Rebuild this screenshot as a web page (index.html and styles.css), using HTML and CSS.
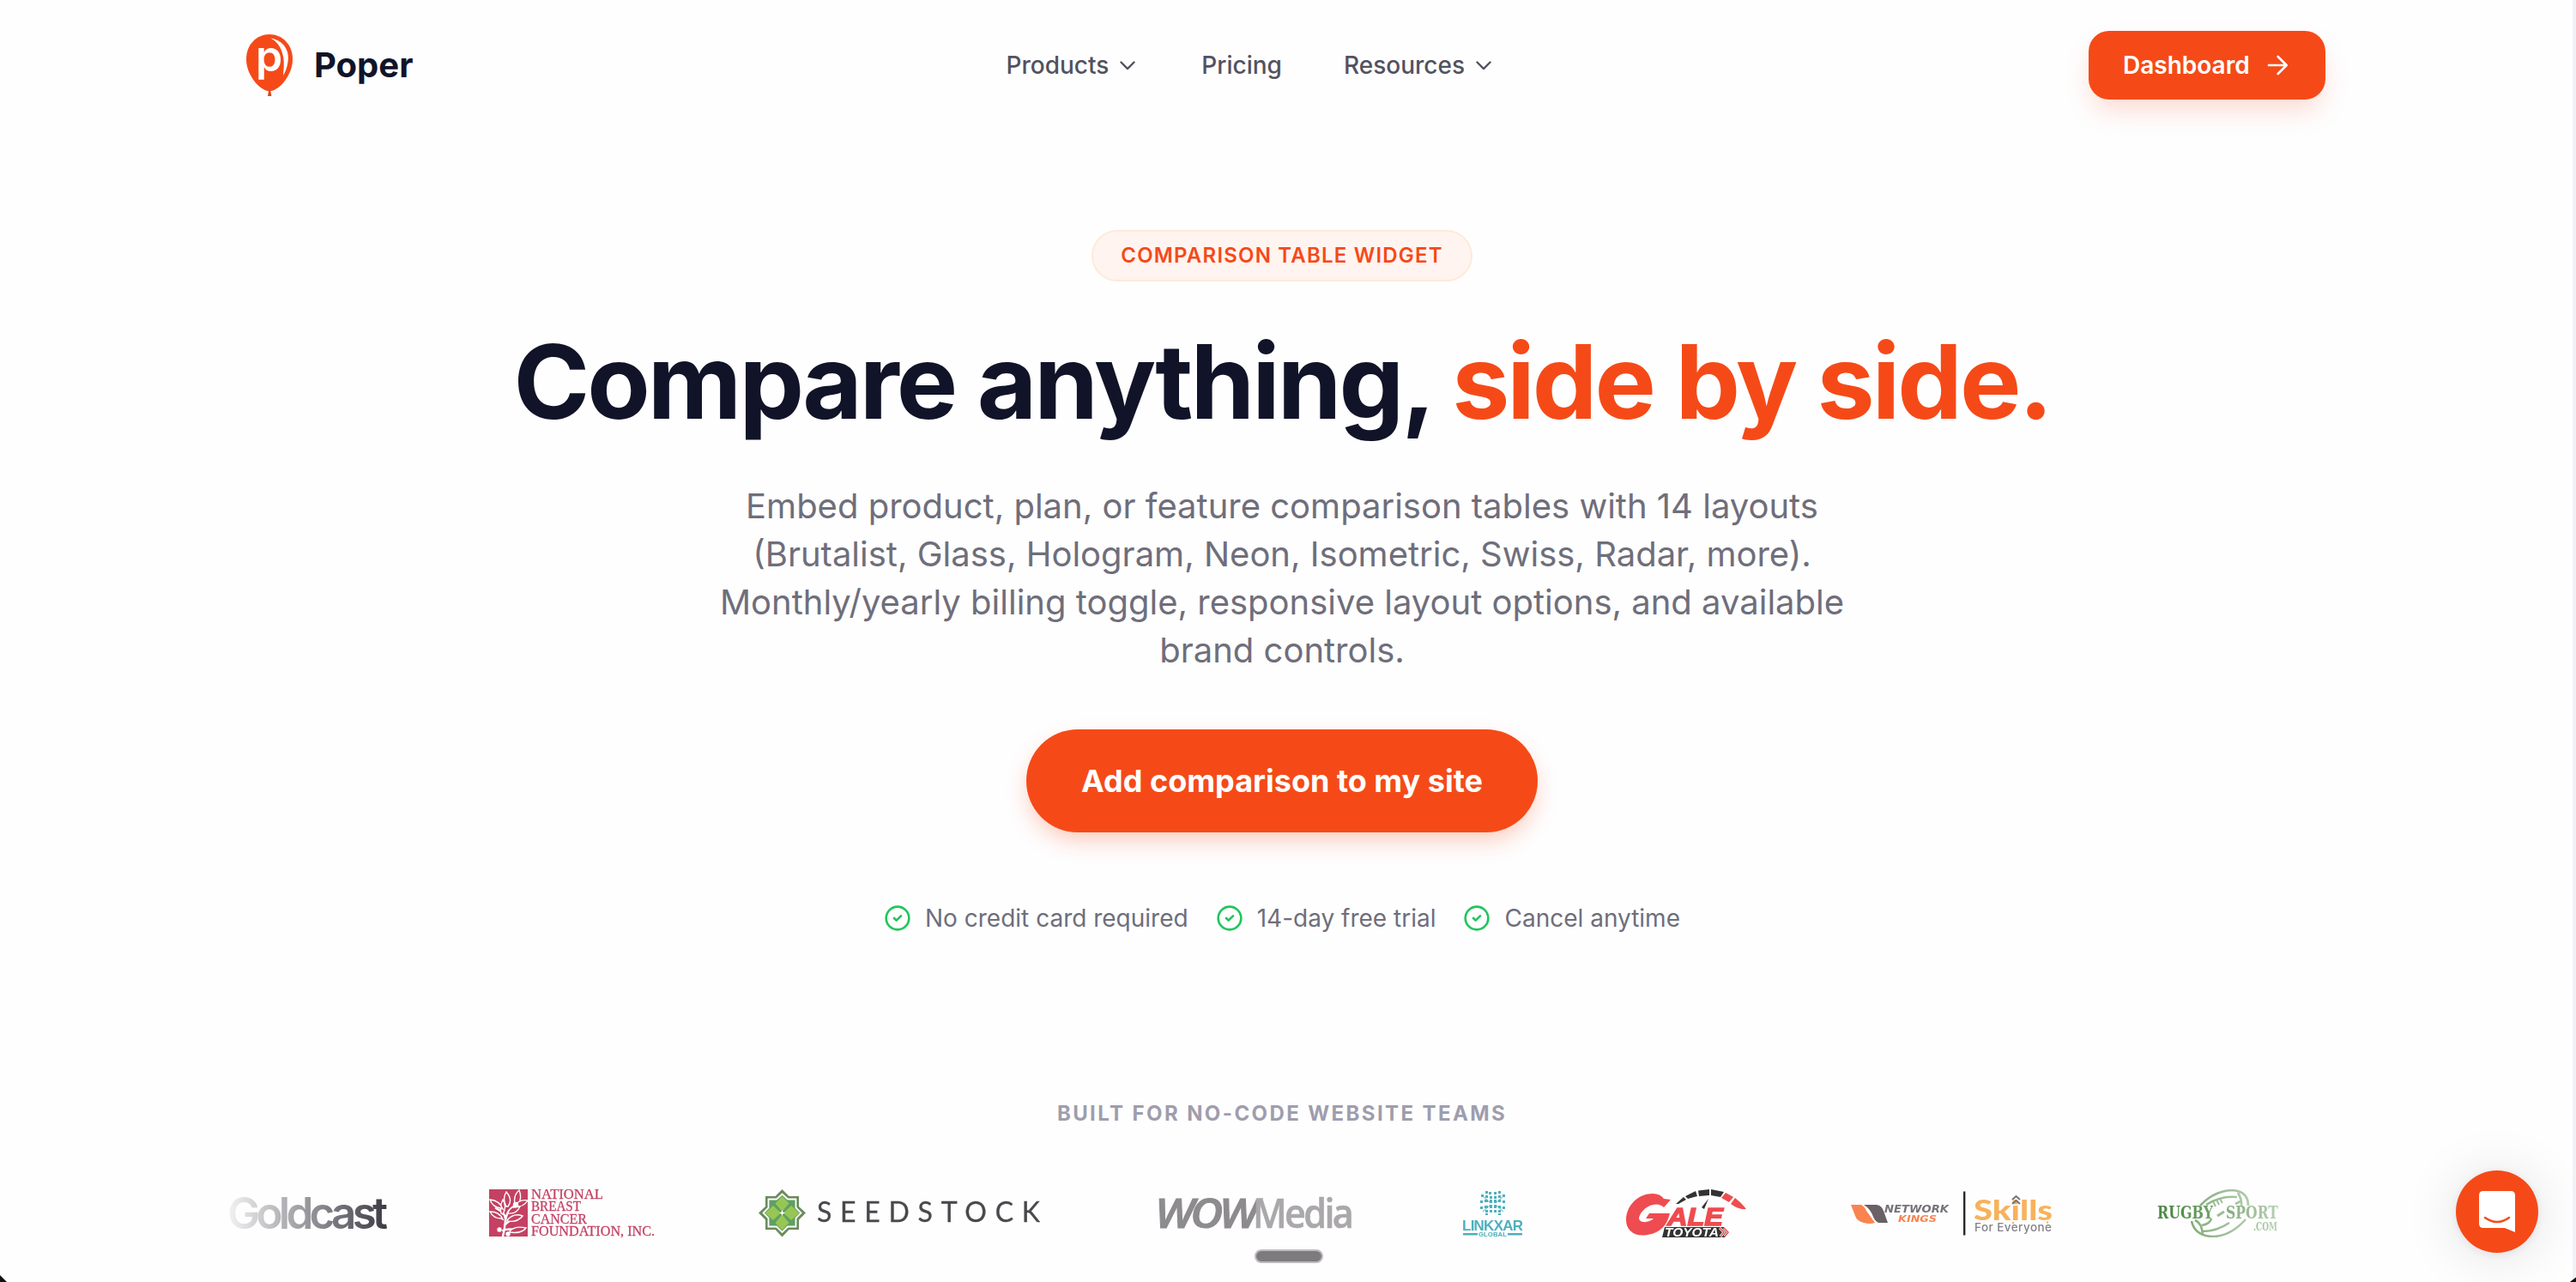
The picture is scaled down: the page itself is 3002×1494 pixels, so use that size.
FILE: index.html
```html
<!DOCTYPE html>
<html lang="en">
<head>
    <meta charset="utf-8">
    <title>Comparison Table Widget | Poper</title>
    <link rel="stylesheet" href="styles.css">
</head>
<body>
    <div class="page">
        <header class="header">
            <a class="brand">
                <svg class="brand-mark" width="72" height="80" viewBox="0 0 72 80">
                    <path d="M36 4C51 4 63 16 63 33c0 17-13 33-23 36.500q-4 1.200-8 0C22 66 9 50 9 33 9 16 21 4 36 4z" fill="#f54a18"/>
                    <path d="M35.300 69h1.800l.6 3 .7 4h-4.400l.7-4z" fill="#d9481c"/>
                    <text x="20" y="46.500" class="mark-p">p</text>
                    <path d="M37.500 8.500C53 11 60 24 57.500 36c-1 7-3 12-5.500 16 .5-8 2-17-1-26-2-8-7-14-13.500-17.500z" fill="#fff"/>
                </svg>
                <span>Poper</span>
            </a>
            <nav class="nav">
                <a>Products <svg width="28" height="28" viewBox="0 0 24 24"><path d="m5.500 9 6.500 6.500L18.500 9"/></svg></a>
                <a>Pricing</a>
                <a>Resources <svg width="28" height="28" viewBox="0 0 24 24"><path d="m5.500 9 6.500 6.500L18.500 9"/></svg></a>
            </nav>
            <a class="dashboard">Dashboard
                <svg width="32" height="32" viewBox="0 0 24 24"><path d="M4.500 12h15M12.500 4.500 20 12l-7.500 7.500"/></svg>
            </a>
        </header>

        <main class="hero">
            <div class="tag">COMPARISON TABLE WIDGET</div>
            <h1>Compare anything, <span>side by side.</span></h1>
            <p class="lead">Embed product, plan, or feature comparison tables with 14 layouts<br>
                (Brutalist, Glass, Hologram, Neon, Isometric, Swiss, Radar, more).<br>
                Monthly/yearly billing toggle, responsive layout options, and available<br>
                brand controls.</p>
            <a class="cta">Add comparison to my site</a>
            <ul class="checks">
                <li><svg width="32" height="32" viewBox="0 0 24 24"><circle cx="12" cy="12" r="10"/><path d="m9 12 2 2 4-4"/></svg>No credit card required</li>
                <li><svg width="32" height="32" viewBox="0 0 24 24"><circle cx="12" cy="12" r="10"/><path d="m9 12 2 2 4-4"/></svg>14-day free trial</li>
                <li><svg width="32" height="32" viewBox="0 0 24 24"><circle cx="12" cy="12" r="10"/><path d="m9 12 2 2 4-4"/></svg>Cancel anytime</li>
            </ul>
        </main>

        <section class="teams">
            <h2>BUILT FOR NO-CODE WEBSITE TEAMS</h2>
            <div class="logos">
                <!-- Goldcast -->
                <svg width="183" height="56" viewBox="0 0 183 56">
                    <text x="-2" y="46" textLength="187" font-family="Inter" font-weight="600" font-size="51" fill="#3b3944">Goldcast</text>
                </svg>
                <!-- National Breast Cancer Foundation -->
                <svg width="194" height="56" viewBox="0 0 194 56">
                    <path d="M0 0h45v55H0z" fill="#c44163"/>
                    <g fill="#c44163" stroke="#fff" stroke-width="1.400" stroke-linecap="round">
                        <path d="M16 55c2-9 3-14 3-21-1-7-6-9-11-12M19 36c2-9 4-13 11-17M18 42c5-6 9-7 14-9M16 48c6-3 11-1 16-1" fill="none" stroke-width="2.400"/>
                        <path d="M20 20q-5-9 0-17 8 9 2 17zM30 17q-2-10 5-16 4 10-2 17zM14 28q-2-9 2-16 5 8 0 17z"/>
                        <path d="M14 22Q4 21 1 12q11 1 15 11zM14 34Q5 34 1 26q11 0 15 9zM22 27q4-9 14-7-4 9-14 8zM21 36q8-9 18-5-6 8-18 6zM29 20q6-9 16-7-5 8-16 8zM24 49q6-7 19-4-5 7-19 5z"/>
                        <circle cx="31" cy="18" r="2.500" fill="#fff"/><circle cx="12" cy="47" r="2" fill="#fff"/><circle cx="22" cy="52" r="2" fill="#fff"/>
                    </g>
                    <g font-family="Liberation Serif" font-size="17" fill="#c44163" stroke="#c44163" stroke-width=".3">
                        <text x="49" y="11" textLength="84" lengthAdjust="spacingAndGlyphs">NATIONAL</text>
                        <text x="49" y="25.200" textLength="58" lengthAdjust="spacingAndGlyphs">BREAST</text>
                        <text x="49" y="39.500" textLength="65" lengthAdjust="spacingAndGlyphs">CANCER</text>
                        <text x="49" y="53.500" textLength="144" lengthAdjust="spacingAndGlyphs">FOUNDATION, INC.</text>
                    </g>
                </svg>
                <!-- Seedstock -->
                <svg width="345" height="56" viewBox="0 0 345 56">
                    <path d="m27.500 0 8 8H47v12l8 7.500-8 8V47H35.500l-8 8.500-8-8.500H8V35.500l-8-8L8 20V8h11.500z" fill="#6b8a5c"/>
                    <path d="m27.500 5.500 6.500 6h9.500v10l6 6-6 6v10H34l-6.500 6.500-6.500-6.500h-9.500v-10l-6-6 6-6v-10H21z" fill="#5e9f63" stroke="#fff" stroke-width="1.800"/>
                    <path d="m27.500 8 8 8.500-8 9.500-8-9.500zM27.500 29.500l8 9.500-8 8.500-8-8.500zM7.500 27.500 17 19l9 8.500-9 8.500zM47.500 27.500 38 19l-9 8.500 9 8.500z" fill="#97c653"/>
                    <path d="M17 17l21 21M38 17 17 38" stroke="#5e9f63" stroke-width="1.500"/>
                    <path d="m27.500 24 1 2.500 2.500 1-2.500 1-1 2.500-1-2.500-2.500-1 2.500-1z" fill="#fff"/>
                    <text x="68" y="38" textLength="260" font-family="Lato" font-size="32" fill="#4a484c" stroke="#4a484c" stroke-width=".3">SEEDSTOCK</text>
                </svg>
                <!-- WOWMedia -->
                <svg width="235" height="56" viewBox="0 0 235 56">
                    <text x="-3" y="45" textLength="116" lengthAdjust="spacingAndGlyphs" font-family="Open Sans" font-style="italic" font-weight="600" font-size="47" letter-spacing="-4" fill="#8d8b8e" stroke="#8d8b8e" stroke-width="1">WOW</text>
                    <text x="111" y="45" textLength="115" lengthAdjust="spacingAndGlyphs" font-family="Open Sans" font-weight="600" font-size="47" letter-spacing="-3" fill="#aaa8ab" stroke="#aaa8ab" stroke-width=".6">Media</text>
                </svg>
                <!-- Linkxar -->
                <svg width="71" height="56" viewBox="0 0 71 56" fill="#4fb0bd">
                    <path d="M27 2h3v3h-3zM31 3h3v3h-3zM37 3h3v3h-3zM42 2h3v3h-3zM22 6h3v3h-3zM27 7h3v3h-3zM32 8h3v3h-3zM37 8h3v3h-3zM42 7h3v3h-3zM47 6h3v3h-3zM21 13h3v3h-3zM26 12h4v3h-4zM32 12h3v4h-3zM37 12h3v4h-3zM42 12h3v3h-3zM47 13h3v3h-3zM21 20h3v3h-3zM26 19h4v3h-4zM32 18h3v4h-3zM37 18h3v4h-3zM42 19h3v3h-3zM47 20h3v3h-3zM27 24h3v3h-3zM32 24h3v3h-3zM37 24h3v3h-3zM42 24h3v3h-3zM27 28h3v2h-3zM42 28h3v2h-3z"/>
                    <path d="m24 8 9 8M48 8l-9 8M24 26l9-8M48 26l-9-8" stroke="#4fb0bd"/>
                    <text x="0" y="48" textLength="71" font-family="Liberation Sans" font-weight="700" font-size="17">LINKXAR</text>
                    <path d="M1 51h17v2.500H1zM53 51h17v2.500H53z"/>
                    <text x="19" y="55" textLength="33" lengthAdjust="spacingAndGlyphs" font-family="Liberation Sans" font-weight="700" font-size="7.500">GLOBAL</text>
                </svg>
                <!-- Gale Toyota -->
                <svg width="143" height="56" viewBox="0 0 143 56">
                    <path d="M52 12 44 21q-5-5-13-3C22 20 15 29 15 34c1 6 12 5 17 0h-9l4-6h24q-5 22-26 25C9 56 0 47 0 36 0 18 15 5 31 5q9 0 13 6z" fill="#ee4c50"/>
                    <path d="M58 17l9-8 3 3-9 5zM69 8l12-6 2 6-11 3zM84 1.500 97 0v7l-12 1zM99 0l15 3-4 6-11-2z" fill="#333"/>
                    <path d="m116 4 9 5-5 6-9-5zM127 10l7 6 6 7q-9 1-18-6z" fill="#ee4c50"/>
                    <path d="m96 11-5 12-3-2z" fill="#333"/>
                    <text x="48" y="42" textLength="65" lengthAdjust="spacingAndGlyphs" font-family="Liberation Sans" font-weight="700" font-style="italic" font-size="30" fill="#ee4c50" stroke="#ee4c50" stroke-width="1.500">ALE</text>
                    <path d="M45 44h69l6 6-5 6H42z" fill="#333"/>
                    <text x="45" y="55" textLength="63" lengthAdjust="spacingAndGlyphs" font-family="Liberation Sans" font-weight="700" font-style="italic" font-size="14" fill="#fff">TOYOTA</text>
                    <path d="m109 45 5 5-4 5M114 45l5 5-4 5" fill="none" stroke="#fff" stroke-width="3"/>
                    <path d="m109 45 5 5-4 5M114 45l5 5-4 5" fill="none" stroke="#ee4c50" stroke-width="1.500"/>
                </svg>
                <!-- Network Kings + Skills For Everyone -->
                <svg width="236" height="56" viewBox="0 0 236 56">
                    <path d="M-1 18h12q4 2 6 7l10 14q-6 2-13 0Q6 37 4 31z" fill="#fa8350"/>
                    <path d="M14 18h15q6 1 8 7l5 14H31q-4-2-6-7-3-9-11-14z" fill="#696165"/>
                    <text x="38" y="27" textLength="75" lengthAdjust="spacingAndGlyphs" font-family="DejaVu Sans" font-style="italic" font-weight="700" font-size="11.500" fill="#77727a">NETWORK</text>
                    <text x="54" y="37.500" textLength="45" lengthAdjust="spacingAndGlyphs" font-family="DejaVu Sans" font-style="italic" font-weight="700" font-size="11" fill="#fa8350">KINGS</text>
                    <path d="M130 2.500h2.400v51H130z" fill="#29282b"/>
                    <text x="142" y="36" textLength="92" lengthAdjust="spacingAndGlyphs" font-family="Lato" font-weight="900" font-size="33" fill="#f7b25c">Skills</text>
                    <path d="m187 12 4.500-4 4.500 4M187 17l4.500-4 4.500 4" fill="none" stroke="#77727a" stroke-width="2"/>
                    <text x="143" y="48.500" textLength="90" font-family="Inter" font-weight="500" font-size="13.500" fill="#85818a">For Everyone</text>
                    <circle cx="188" cy="39" r="1.200" fill="#f7b25c"/><circle cx="228" cy="38.500" r="1.200" fill="#f7b25c"/>
                </svg>
                <!-- Rugby-Sport -->
                <svg width="142" height="56" viewBox="0 0 142 56">
                    <g fill="none" stroke="#77a46b" stroke-width="2.600">
                        <path d="M50 19Q66 2 87 1q19 1 19 18M40 37q4 18 26 18 20-1 37-20"/>
                        <path d="M57 18Q74 7 93 9M53 49q16 0 31-10M52 42q10-2 11-8M44 36q8 3 9 17M94 4q5 8 4 15M91 17l6-3"/>
                        <path d="M70 31l8-5" stroke-width="3"/><path d="m65 14 3 6M69 12l3 6M73 11l3 5" stroke-width="1.800"/>
                    </g>
                    <g fill="#4f8a46" font-family="DejaVu Serif" font-weight="700">
                        <text x="0" y="34" textLength="65" font-size="19.500" lengthAdjust="spacingAndGlyphs">RUGBY</text>
                        <text x="80" y="34" textLength="61" font-size="19.500" lengthAdjust="spacingAndGlyphs">SPORT</text>
                        <text x="112" y="48" textLength="28" font-size="12" lengthAdjust="spacingAndGlyphs">.COM</text>
                    </g>
                </svg>
            </div>
        </section>
    </div>

    <div class="drag-bar"></div>
    <div class="chat">
        <svg width="42" height="48" viewBox="0 0 42 48">
            <path d="M5 0h32q5 0 5 5v43l-12-5H5q-5 0-5-5V5q0-5 5-5z" fill="#fff"/>
            <path d="M7 31q14 10 28 0" fill="none" stroke="#f54a18" stroke-width="2.400" stroke-linecap="round"/>
        </svg>
    </div>
    <div class="scrollbar"></div>
    <div class="corner left"></div>
    <div class="corner right"></div>
</body>
</html>
```
FILE: styles.css
```css
* {
    margin: 0;
    padding: 0;
    box-sizing: border-box;
}
html,
body {
    height: 100%;
    overflow: hidden;
}
body {
    background: #fefefe;
    font-family: Inter, "Liberation Sans", sans-serif;
    color: #111428;
}
.page {
    width: 2988px;
}
.header {
    width: 2560px;
    height: 152px;
    margin: 0 auto;
    padding: 0 64px;
    display: flex;
    justify-content: space-between;
    align-items: center;
}
.brand {
    display: flex;
    align-items: center;
    gap: 16px;
    font-size: 40px;
    font-weight: 700;
}
.brand span {
    padding-bottom: 2px;
}
.mark-p {
    font-size: 50px;
    font-weight: 600;
    fill: #fff;
}
.nav {
    display: flex;
    gap: 72px;
    font-size: 28px;
    font-weight: 500;
    color: #52525f;
}
.nav a {
    display: flex;
    align-items: center;
    gap: 8px;
}
.nav svg,
.dashboard svg,
.checks svg {
    fill: none;
    stroke: currentColor;
    stroke-width: 2;
    stroke-linecap: round;
    stroke-linejoin: round;
}
.dashboard {
    width: 276px;
    height: 80px;
    padding-left: 40px;
    display: flex;
    align-items: center;
    gap: 16px;
    border-radius: 24px;
    background: #f54a18;
    color: #fff;
    font-size: 28px;
    font-weight: 600;
    box-shadow: 0 16px 32px -6px rgba(245, 74, 24, 0.22);
}
.hero {
    padding-top: 116px;
    display: flex;
    flex-direction: column;
    align-items: center;
    text-align: center;
}
.tag {
    width: 444px;
    height: 60px;
    line-height: 56px;
    border: 2px solid #ffead8;
    border-radius: 30px;
    background: #fff4ef;
    color: #f54a18;
    font-size: 24px;
    font-weight: 600;
    letter-spacing: 1.2px;
}
h1 {
    margin-top: 53px;
    height: 128px;
    line-height: 128px;
    font-size: 120px;
    font-weight: 700;
    letter-spacing: -3px;
    white-space: nowrap;
}
h1 span {
    color: #f54a18;
}
.lead {
    margin-top: 53px;
    font-size: 40px;
    line-height: 56px;
    color: #6f6e7b;
}
.cta {
    margin-top: 64px;
    width: 596px;
    height: 120px;
    line-height: 120px;
    border-radius: 60px;
    background: #f54a18;
    color: #fff;
    font-size: 36px;
    font-weight: 700;
    box-shadow: 0 12px 28px -4px rgba(245, 74, 24, 0.3);
}
.checks {
    margin-top: 80px;
    display: flex;
    gap: 32px;
    list-style: none;
    font-size: 28px;
    line-height: 40px;
    color: #6f6e7b;
}
.checks li {
    display: flex;
    align-items: center;
    gap: 16px;
}
.checks svg {
    stroke: #22c55e;
}
.teams {
    padding-top: 191px;
}
.teams h2 {
    text-align: center;
    font-size: 24px;
    line-height: 34px;
    font-weight: 700;
    letter-spacing: 2.4px;
    color: #9f9dad;
}
.logos {
    width: 2480px;
    margin: 71px auto 0;
    padding-left: 13px;
    display: flex;
    gap: 120px;
    -webkit-mask-image: linear-gradient(90deg, transparent, #000 8%, #000 92%, transparent);
    mask-image: linear-gradient(90deg, transparent, #000 8%, #000 92%, transparent);
}
.logos svg {
    flex: none;
    overflow: visible;
}
.chat {
    position: fixed;
    left: 2862px;
    top: 1364px;
    width: 96px;
    height: 96px;
    display: flex;
    align-items: center;
    justify-content: center;
    border-radius: 50%;
    background: #f54a18;
    box-shadow: 0 2px 12px rgba(20, 20, 50, 0.08), 0 4px 64px rgba(20, 20, 50, 0.12);
}
.drag-bar {
    position: fixed;
    left: 1462px;
    top: 1456px;
    width: 80px;
    height: 16px;
    border: 2px solid #bdbbbd;
    border-radius: 8px;
    background: #7e7b7f;
}
.scrollbar {
    position: fixed;
    top: 0;
    right: 0;
    width: 4px;
    height: 100%;
    background: #f2f1f5;
}
/* rounded window corners */
.corner {
    position: fixed;
    bottom: 0;
    width: 8px;
    height: 8px;
    background: #111;
}
.left {
    left: 0;
    clip-path: polygon(0 0, 100% 100%, 0 100%);
}
.right {
    right: 0;
    clip-path: polygon(100% 30%, 100% 100%, 10% 100%);
}
```
